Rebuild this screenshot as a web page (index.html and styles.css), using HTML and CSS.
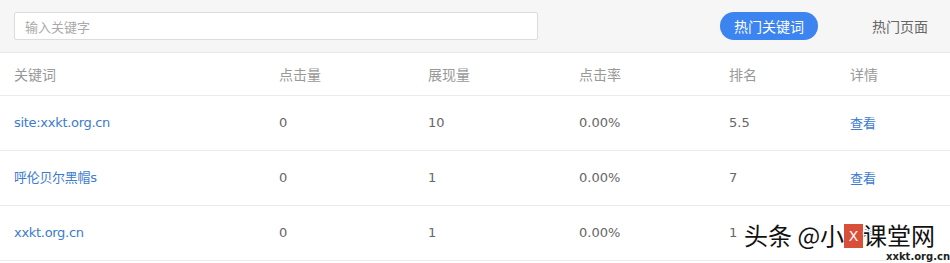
FILE: index.html
```html
<!DOCTYPE html>
<html lang="zh">
<head>
<meta charset="utf-8">
<link rel="stylesheet" href="styles.css">
</head>
<body>
<div class="page">
  <div class="toolbar">
    <div class="search"><input class="search-input" type="text" placeholder="输入关键字"></div>
    <div class="tabs">
      <span class="tab tab-active">热门关键词</span>
      <span class="tab">热门页面</span>
    </div>
  </div>
  <div class="table">
    <div class="row head">
      <div>关键词</div><div>点击量</div><div>展现量</div><div>点击率</div><div>排名</div><div>详情</div>
    </div>
    <div class="row">
      <div><a class="link">site:xxkt.org.cn</a></div><div>0</div><div>10</div><div>0.00%</div><div>5.5</div><div><a class="link cjk">查看</a></div>
    </div>
    <div class="row">
      <div><a class="link">呼伦贝尔黑帽s</a></div><div>0</div><div>1</div><div>0.00%</div><div>7</div><div><a class="link cjk">查看</a></div>
    </div>
    <div class="row">
      <div><a class="link">xxkt.org.cn</a></div><div>0</div><div>1</div><div>0.00%</div><div>1</div><div><a class="link cjk">查看</a></div>
    </div>
  </div>
  <div class="watermark">
    <span class="wm-text">头条 @小</span><span class="wm-logo">X</span><span class="wm-text">课堂网</span>
    <span class="wm-url">xxkt.org.cn</span>
  </div>
</div>
</body>
</html>
```
FILE: styles.css
```css
* { box-sizing: border-box; }
html, body { margin: 0; padding: 0; background: #fff; }
body {
  font-family: "DejaVu Sans", "Noto Sans CJK SC", sans-serif;
  font-size: 13px;
  color: #666;
}
.page { position: relative; width: 950px; height: 263px; overflow: hidden; }
.toolbar {
  height: 53px;
  background: #f6f6f6;
  border-bottom: 1px solid #e8e8e8;
  display: flex;
  align-items: center;
  padding: 0 0 0 14px;
}
.search { width: 524px; }
.search-input {
  width: 100%;
  height: 28px;
  border: 1px solid #dcdcdc;
  border-radius: 2px;
  background: #fff;
  padding: 0 10px;
  font-family: "Noto Sans CJK SC", sans-serif;
  font-size: 13px;
  outline: none;
}
.search-input::placeholder { color: #aaa; }
.tabs {
  margin-left: 182px;
  display: flex;
  align-items: center;
}
.tab {
  font-family: "Noto Sans CJK SC", sans-serif;
  font-size: 14px;
  color: #666;
  line-height: 28px;
}
.tab-active {
  width: 98px;
  height: 28px;
  border-radius: 14px;
  background: #3c84f0;
  color: #fff;
  text-align: center;
  margin-right: 54px;
}
.table { display: flex; flex-direction: column; }
.row {
  display: grid;
  grid-template-columns: 265px 149px 151px 150px 121px 1fr;
  padding-left: 14px;
  align-items: center;
  height: 55px;
  line-height: 20px;
  border-bottom: 1px solid #ebebeb;
}
.row > div { height: 20px; }
.row.head { height: 43px; color: #999; font-family: "Noto Sans CJK SC", sans-serif; font-size: 14px; }
.link { color: #3b7bd0; text-decoration: none; letter-spacing: -0.3px; }
.link.cjk { font-family: "Noto Sans CJK SC", sans-serif; letter-spacing: 0; }
.watermark {
  position: absolute;
  left: 744px;
  top: 219px;
  width: 206px;
  height: 44px;
}
.wm-text {
  font-family: "Noto Sans CJK SC", sans-serif;
  font-size: 24px;
  line-height: 32px;
  color: #111;
  text-shadow: 1px 1px 0 #fff, -1px -1px 0 #fff, 1px -1px 0 #fff, -1px 1px 0 #fff;
  vertical-align: top;
}
.wm-logo {
  display: inline-block;
  vertical-align: top;
  margin-top: 5px;
  width: 19px;
  height: 24px;
  background: #d9503a;
  color: #fff;
  font-family: "DejaVu Sans", sans-serif;
  font-size: 14px;
  line-height: 24px;
  text-align: center;
}
.wm-url {
  position: absolute;
  right: 0;
  bottom: 0;
  font-family: "DejaVu Sans", sans-serif;
  font-weight: bold;
  font-size: 10px;
  line-height: 12px;
  color: #222;
  background: rgba(255,255,255,0.7);
}
```
